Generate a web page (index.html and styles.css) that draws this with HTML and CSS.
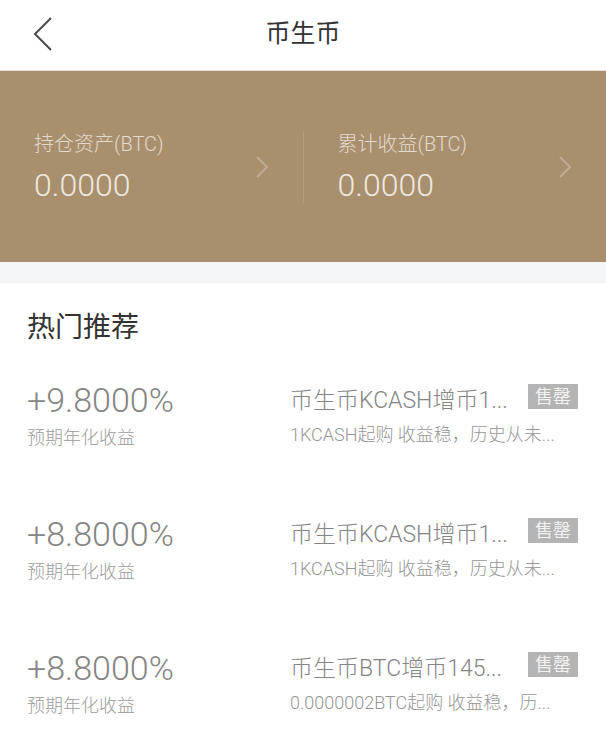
FILE: index.html
```html
<!DOCTYPE html>
<html lang="zh-CN">

<head>
    <meta charset="UTF-8">
    <meta name="viewport" content="width=device-width, initial-scale=1.0">
    <title>币生币</title>
    <link rel="stylesheet" href="styles.css">
</head>

<body>
    <div class="nav">
        <a href="#" class="nav-back">
            <svg width="22" height="36" viewBox="0 0 22 36">
                <polyline points="19,2 3,18 19,34" fill="none" stroke="#4a4a4a" stroke-width="2" />
            </svg>
        </a>
        <div class="nav-title">币生币</div>
    </div>

    <div class="banner">
        <div class="asset">
            <div class="asset-info">
                <div class="asset-label">持仓资产(BTC)</div>
                <div class="asset-num">0.0000</div>
            </div>
            <svg class="asset-arrow" width="14" height="24" viewBox="0 0 14 24">
                <polyline points="2,2 12,12 2,22" fill="none" stroke="#bfac94" stroke-width="2" />
            </svg>
        </div>
        <div class="asset">
            <div class="asset-info">
                <div class="asset-label">累计收益(BTC)</div>
                <div class="asset-num">0.0000</div>
            </div>
            <svg class="asset-arrow" width="14" height="24" viewBox="0 0 14 24">
                <polyline points="2,2 12,12 2,22" fill="none" stroke="#bfac94" stroke-width="2" />
            </svg>
        </div>
    </div>

    <div class="gap"></div>

    <div class="hot">
        <div class="hot-title">热门推荐</div>

        <div class="item">
            <div class="item-left">
                <div class="item-rate">+9.8000%</div>
                <div class="item-tip">预期年化收益</div>
            </div>
            <div class="item-right">
                <div class="item-head">
                    <span class="item-name">币生币KCASH增币1...</span>
                    <span class="item-tag">售罄</span>
                </div>
                <div class="item-desc">1KCASH起购 收益稳，历史从未...</div>
            </div>
        </div>

        <div class="item">
            <div class="item-left">
                <div class="item-rate">+8.8000%</div>
                <div class="item-tip">预期年化收益</div>
            </div>
            <div class="item-right">
                <div class="item-head">
                    <span class="item-name">币生币KCASH增币1...</span>
                    <span class="item-tag">售罄</span>
                </div>
                <div class="item-desc">1KCASH起购 收益稳，历史从未...</div>
            </div>
        </div>

        <div class="item">
            <div class="item-left">
                <div class="item-rate">+8.8000%</div>
                <div class="item-tip">预期年化收益</div>
            </div>
            <div class="item-right">
                <div class="item-head">
                    <span class="item-name">币生币BTC增币145...</span>
                    <span class="item-tag">售罄</span>
                </div>
                <div class="item-desc">0.0000002BTC起购 收益稳，历...</div>
            </div>
        </div>
    </div>
</body>

</html>
```
FILE: styles.css
```css
* {
    padding: 0;
    margin: 0;
    box-sizing: border-box;
}

body {
    font-family: Roboto, "Noto Sans CJK SC", sans-serif;
    background-color: #fff;
    overflow: hidden;
}

a {
    text-decoration: none;
}

.nav {
    position: relative;
    height: 71px;
    border-bottom: 1px solid #e2dfdb;
    display: flex;
    align-items: center;
    justify-content: center;
}

.nav-back {
    position: absolute;
    left: 32px;
    top: 16px;
    display: block;
}

.nav-title {
    font-size: 25px;
    color: #333;
    line-height: 36px;
    margin-top: -2px;
}

.banner {
    height: 191px;
    background-color: #a8906f;
    display: flex;
    align-items: center;
}

.asset {
    flex: 1;
    height: 72px;
    padding: 0 34px;
    display: flex;
    align-items: center;
    justify-content: space-between;
}

.asset + .asset {
    border-left: 1px solid #b39d80;
}

.asset-label {
    font-size: 20px;
    line-height: 26px;
    font-weight: 300;
    color: #e4d9cb;
}

.asset-num {
    margin-top: 10px;
    font-size: 32px;
    line-height: 36px;
    font-weight: 300;
    color: #efe8de;
}

.gap {
    height: 21px;
    background-color: #f4f5f7;
}

.hot {
    padding: 27px 0 0 27px;
}

.hot-title {
    font-size: 28px;
    line-height: 36px;
    color: #333;
    margin-bottom: 34px;
}

.item {
    height: 134px;
    display: flex;
    align-items: flex-start;
}

.item:last-child {
    height: auto;
}

.item-left {
    width: 263px;
}

.item-rate {
    font-size: 34px;
    line-height: 40px;
    font-weight: 300;
    color: #858585;
}

.item-tip {
    margin-top: 6px;
    font-size: 18px;
    line-height: 24px;
    font-weight: 300;
    color: #9c9c9c;
}

.item-right {
    flex: 1;
    padding-right: 28px;
}

.item-head {
    height: 36px;
    display: flex;
    align-items: center;
    justify-content: space-between;
}

.item-name {
    font-size: 23px;
    font-weight: 300;
    color: #858585;
}

.item-tag {
    width: 50px;
    height: 25px;
    line-height: 25px;
    text-align: center;
    font-size: 18px;
    color: #f2f2f2;
    background-color: #b4b4b4;
    margin-top: -4px;
}

.item-desc {
    margin-top: 7px;
    font-size: 18px;
    line-height: 24px;
    font-weight: 300;
    color: #969696;
}
```
